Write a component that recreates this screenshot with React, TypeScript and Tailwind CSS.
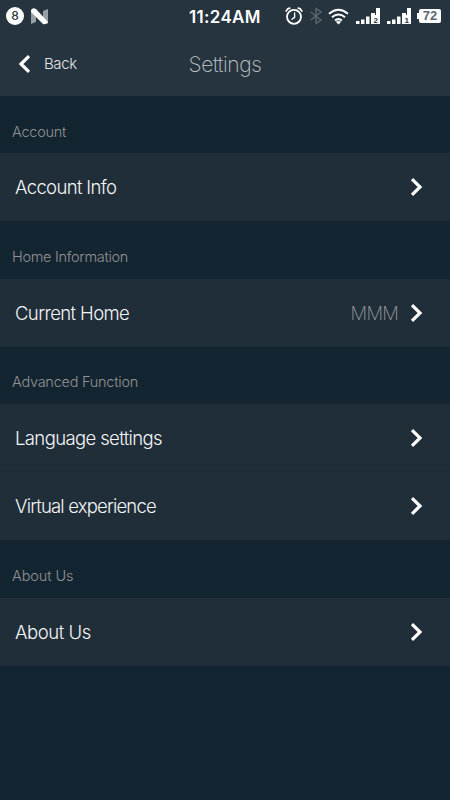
import clsx from "clsx";

type Row = {
  label: string;
  value?: string;
  tracking: string;
};

type Section = {
  title: string;
  tracking: string;
  headerHeight: string;
  rows: Row[];
};

const sections: Section[] = [
  {
    title: "Account",
    tracking: "tracking-[-0.25px]",
    headerHeight: "h-14",
    rows: [{ label: "Account Info", tracking: "tracking-[-0.65px]" }],
  },
  {
    title: "Home Information",
    tracking: "tracking-[-0.3px]",
    headerHeight: "h-[58px]",
    rows: [{ label: "Current Home", value: "MMM", tracking: "tracking-[-0.6px]" }],
  },
  {
    title: "Advanced Function",
    tracking: "tracking-[-0.25px]",
    headerHeight: "h-[57px]",
    rows: [
      { label: "Language settings", tracking: "tracking-[-0.62px]" },
      { label: "Virtual experience", tracking: "tracking-[-0.82px]" },
    ],
  },
  {
    title: "About Us",
    tracking: "tracking-[-0.1px]",
    headerHeight: "h-[58px]",
    rows: [{ label: "About Us", tracking: "tracking-[-0.45px]" }],
  },
];

function Signal({ sim }: { sim: string }) {
  return (
    <svg width="25" height="17" viewBox="0 0 25 17" fill="#fff">
      <rect x="0" y="13" width="3.5" height="3" />
      <rect x="5" y="11.500" width="3.5" height="4.500" />
      <rect x="10" y="8.500" width="3.5" height="7.500" />
      <path d="M15 5h4v2h1V0h4v16h-9z" />
      <text x="17.500" y="14.500" fill="#26343f" fontSize="8" fontWeight="700" fontFamily="Liberation Sans">
        {sim}
      </text>
    </svg>
  );
}

function StatusBar() {
  return (
    <div className="grid h-8 grid-cols-[189px_96px_1fr] items-center">
      <div className="flex items-center gap-[7px] pl-[6px]">
        <div className="flex size-[18px] items-center justify-center rounded-full bg-white text-[12px] font-medium text-[#26343f]">
          8
        </div>
        <svg width="17" height="17" viewBox="0 0 17 17">
          <path d="M0 2l5 4v8l-5 2zM12 3l5-2v15l-5-4z" fill="#98a0a5" />
          <path d="M0 2Q2-1 5 1l12 13q-2 3-5 2L0 4z" fill="#fff" />
        </svg>
      </div>
      <span className="pt-[2px] text-[17px] leading-[30px] font-semibold tracking-[0.32px] whitespace-nowrap">
        11:24AM
      </span>
      <div className="flex items-center">
        <svg width="18" height="18" viewBox="0 0 18 18" fill="none" stroke="#fff" strokeLinecap="round">
          <circle cx="9" cy="9.8" r="7" strokeWidth="1.8" />
          <path d="M1.200 4Q2.300 1.500 4.700 1.200M16.800 4Q15.700 1.500 13.300 1.200" strokeWidth="1.8" />
          <path d="M9.600 6v4.300L7 12.300" strokeWidth="1.400" />
        </svg>
        <svg className="ml-[7px]" width="12" height="18" viewBox="0 0 12 18" fill="none" stroke="#5d6870" strokeWidth="1.400">
          <path d="M.7 5L11 13 6 16.500V1.500L11 5 .7 13" />
        </svg>
        <svg className="ml-[6px]" width="21" height="17" viewBox="0 0 21 17" fill="none" stroke="#fff" strokeWidth="2">
          <path d="M1 5.800Q10.500-2.200 20 5.800M4 9.300Q10.500 3.800 17 9.300M7 12.500Q10.500 9.700 14 12.500" />
          <path d="M7.800 13.800Q10.500 12 13.200 13.800L10.500 16.500z" fill="#fff" stroke="none" />
        </svg>
        <div className="ml-[7px] flex gap-[6px]">
          <Signal sim="2" />
          <Signal sim="1" />
        </div>
        <div className="ml-[5px] flex items-center">
          <div className="h-[6px] w-[2px] bg-white" />
          <div className="flex h-[14px] w-[22px] items-center justify-center rounded-[2px] bg-white font-['Liberation_Sans',sans-serif] text-[13px] font-bold text-[#5d6971]">
            72
          </div>
        </div>
      </div>
    </div>
  );
}

function Chevron({ className }: { className?: string }) {
  return (
    <svg
      className={clsx("shrink-0", className)}
      width="13"
      height="20"
      viewBox="0 0 13 20"
      fill="none"
      stroke="#fff"
      strokeWidth="3.2"
    >
      <path d="M2 2.200L10 10l-8 7.800" />
    </svg>
  );
}

function SettingsRow({ label, value, tracking }: Row) {
  return (
    <button className="flex h-[68px] w-full items-center border-b border-[#1c2b37] bg-[#202e3a] pr-[27px] pl-[15px] text-left">
      <span className={clsx("grow pt-[2px] text-[18.500px] font-light text-[#f5f5f5]", tracking)}>{label}</span>
      {value && (
        <span className="mr-3 pt-[2px] text-[18.500px] font-extralight tracking-[-0.8px] text-[#9a9a9a]">{value}</span>
      )}
      <Chevron />
    </button>
  );
}

export default function App() {
  return (
    <div className="h-[800px] w-[450px] overflow-hidden bg-[#142532] font-['Inter','Liberation_Sans',sans-serif] text-white">
      <header className="border-b border-[#142532] bg-[#26343f]">
        <StatusBar />
        <div className="grid h-16 grid-cols-3 items-center">
          <button className="flex items-center gap-[13px] pl-[18px]">
            <Chevron className="rotate-180" />
            <span className="pt-px text-[15px] font-light tracking-[-0.4px] text-[#e4e4e4]">Back</span>
          </button>
          <h1 className="pt-[2px] text-center text-[21px] font-extralight tracking-[-0.4px] text-[#c0c4c7]">
            Settings
          </h1>
        </div>
      </header>
      <main>
        {sections.map((section) => (
          <section key={section.title}>
            <h2
              className={clsx(
                "flex items-center pt-[13px] pl-3 text-[14.500px] font-light text-[#929292]",
                section.headerHeight,
                section.tracking,
              )}
            >
              {section.title}
            </h2>
            {section.rows.map((row) => (
              <SettingsRow key={row.label} {...row} />
            ))}
          </section>
        ))}
      </main>
    </div>
  );
}
